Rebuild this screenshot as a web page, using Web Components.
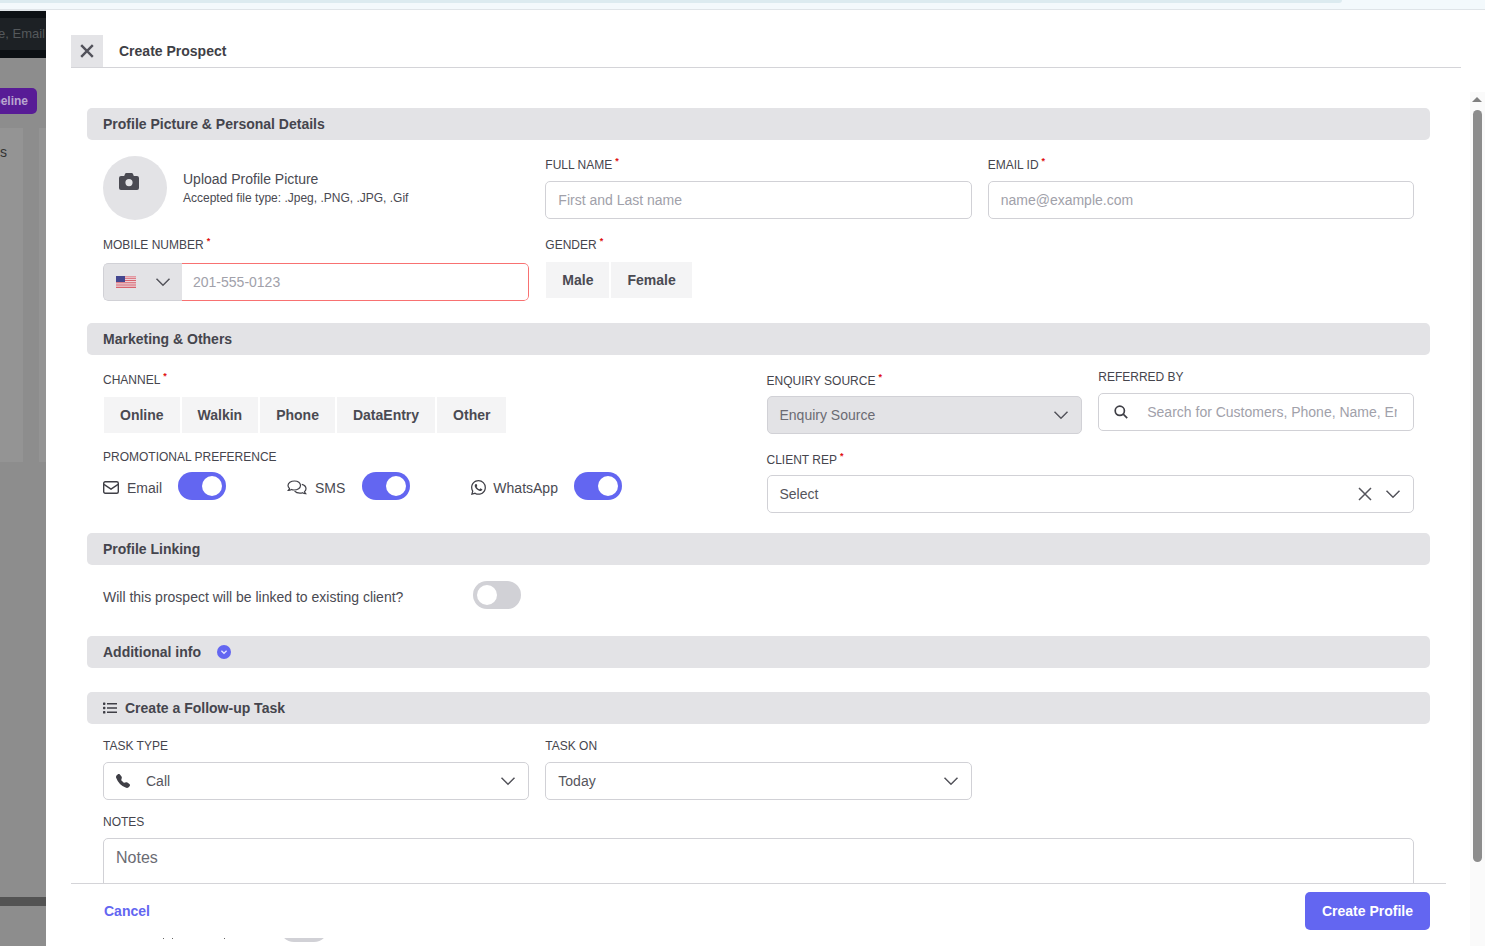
<!DOCTYPE html>
<html>
<head>
<meta charset="utf-8">
<title>Create Prospect</title>
<style>
  html, body { margin: 0; height: 100%; overflow: hidden; background: #f3f9fc; }
  body { font-family: "Liberation Sans", Arial, sans-serif; color: #4a4a52; }
</style>
</head>
<body>
<template id="ic-chevron"><svg width="16" height="16" viewBox="0 0 16 16" fill="none" stroke="#55555c" stroke-width="1.5"><path d="M1.5 4.8 8 11.2l6.5-6.4"/></svg></template>

<app-page>
  <backdrop-page slot="side"></backdrop-page>
  <prospect-drawer slot="main">
    <section-bar>Profile Picture &amp; Personal Details</section-bar>
    <form-row cols="3" style="margin-top:15px">
      <upload-box></upload-box>
      <field-box label="FULL NAME" required><text-field placeholder="First and Last name"></text-field></field-box>
      <field-box label="EMAIL ID" required><text-field placeholder="name@example.com"></text-field></field-box>
    </form-row>
    <form-row cols="3" style="margin-top:15px">
      <field-box label="MOBILE NUMBER" required gap="8"><phone-field placeholder="201-555-0123"></phone-field></field-box>
      <field-box label="GENDER" required gap="7"><button-group items="Male,Female" style="margin-left:1px"></button-group></field-box>
    </form-row>

    <section-bar style="margin-top:22px">Marketing &amp; Others</section-bar>
    <form-row cols="2" style="margin-top:15px">
      <div>
        <field-box label="CHANNEL" required gap="7"><button-group items="Online,Walkin,Phone,DataEntry,Other" style="margin-left:1px"></button-group></field-box>
        <field-box label="PROMOTIONAL PREFERENCE" gap="5" style="margin-top:14px"><promo-row></promo-row></field-box>
      </div>
      <div>
        <form-row cols="2" inner style="margin-top:1px">
          <field-box label="ENQUIRY SOURCE" required gap="5"><select-field value="Enquiry Source" filled></select-field></field-box>
          <field-box label="REFERRED BY" gap="6" style="margin-top:-4px"><search-field placeholder="Search for Customers, Phone, Name, Email"></search-field></field-box>
        </form-row>
        <field-box label="CLIENT REP" required gap="5" style="margin-top:16px"><select-field value="Select" clearable></select-field></field-box>
      </div>
    </form-row>

    <section-bar style="margin-top:20px">Profile Linking</section-bar>
    <link-row style="margin-top:16px">Will this prospect will be linked to existing client?</link-row>

    <section-bar style="margin-top:27px">Additional info<info-badge slot="after"></info-badge></section-bar>
    <section-bar style="margin-top:24px"><list-icon slot="before"></list-icon>Create a Follow-up Task</section-bar>

    <form-row cols="3" style="margin-top:12px">
      <field-box label="TASK TYPE" gap="6"><select-field value="Call" phone></select-field></field-box>
      <field-box label="TASK ON" gap="6"><select-field value="Today"></select-field></field-box>
    </form-row>
    <field-box label="NOTES" gap="6" style="margin:12px 16px 0"><notes-field placeholder="Notes"></notes-field></field-box>
    <hidden-row></hidden-row>
  </prospect-drawer>
</app-page>

<script>
const chevron = () => document.getElementById("ic-chevron").innerHTML;

class AppPage extends HTMLElement {
  constructor() {
    super();
    this.attachShadow({ mode: "open" });
    this.shadowRoot.innerHTML = `
      <style>
        :host { display: flex; flex-direction: column; height: 946px; overflow: hidden; }
        .strip { height: 9px; flex: none; background: #f3f9fc; border-bottom: 2px solid #dfe4e8; position: relative; box-sizing: content-box; }
        .strip i { display: block; height: 3px; width: 1342px; background: #dcebf0; border-radius: 0 0 8px 0; }
        .below { flex: 1; display: flex; min-height: 0; margin-top: -1px; }
      </style>
      <div class="strip"><i></i></div>
      <div class="below"><slot name="side"></slot><slot name="main"></slot></div>
    `;
  }
}

class BackdropPage extends HTMLElement {
  constructor() {
    super();
    this.attachShadow({ mode: "open" });
    this.shadowRoot.innerHTML = `
      <style>
        :host { display: flex; flex-direction: column; width: 46px; flex: none; background: #8d8d8d; overflow: hidden; font-size: 14px; }
        .top { height: 48px; flex: none; background: #0c1014; display: flex; align-items: center; justify-content: flex-end; }
        .search { height: 32px; width: 100%; background: #1d2125; color: #55595c; font-size: 13px; line-height: 32px; text-align: right; white-space: nowrap; direction: rtl; overflow: hidden; padding-right: 1px; box-sizing: border-box; }
        .pipe { margin: 30px 0 0 -30px; width: 67px; height: 26px; flex: none; border-radius: 5px; background: #581c96; color: #b9a6cf; font: bold 12px/26px "Liberation Sans", Arial, sans-serif; text-align: right; padding-right: 9px; box-sizing: border-box; }
        .tabs { display: flex; gap: 16px; height: 48px; margin: 14px 0 0 -20px; flex: none; }
        .tabs div { width: 43px; flex: none; background: #949494; color: #333; line-height: 48px; text-align: right; padding-right: 16px; box-sizing: border-box; }
        .tabs div + div { width: 40px; }
        .panel { height: 286px; flex: none; display: flex; gap: 16px; }
        .panel i { width: 23px; flex: none; background: #949494; }
        .panel i + i { width: 20px; }
        .bar { height: 9px; margin-top: 435px; background: #535353; flex: none; }
      </style>
      <div class="top"><div class="search">e, Email</div></div>
      <div class="pipe">Pipeline</div>
      <div class="tabs"><div>s</div><div></div></div>
      <div class="panel"><i></i><i></i></div>
      <div class="bar"></div>
    `;
  }
}

class ProspectDrawer extends HTMLElement {
  constructor() {
    super();
    this.attachShadow({ mode: "open" });
    this.shadowRoot.innerHTML = `
      <style>
        :host { display: flex; flex: 1; min-width: 0; flex-direction: column; background: #fff; position: relative; overflow: hidden; }
        header { display: flex; align-items: center; margin: 25px 24px 0 25px; height: 33px; flex: none; box-sizing: border-box; border-bottom: 1px solid #d4d4d8; }
        .close { width: 32px; height: 32px; background: #e4e4e7; display: flex; align-items: center; justify-content: center; }
        h1 { margin: 0 0 0 16px; font-size: 14px; font-weight: bold; color: #3f3f46; }
        .scroll { flex: 1; min-height: 0; display: flex; margin-top: 24px; overflow: hidden; }
        .body { margin: 16px 0 0 41px; width: 1343px; flex: none; }
        .track { width: 15px; margin-left: auto; flex: none; background: #fafafa; position: relative; height: 854px; }
        .track b { position: absolute; left: 2px; top: 5px; width: 0; height: 0; border: 5px solid transparent; border-top: 0; border-bottom: 5px solid #808080; }
        .track i { position: absolute; left: 3px; top: 18px; width: 9px; height: 752px; border-radius: 5px; background: #8c8c8c; }
        footer { position: absolute; left: 25px; width: 1375px; top: 873px; height: 55px; border-top: 1px solid #d4d4d8; background: #fff; display: flex; align-items: flex-start; justify-content: space-between; box-sizing: border-box; }
        .cancel { margin: 19px 0 0 33px; font-size: 14px; font-weight: bold; color: #6366f1; line-height: 16px; }
        .create { margin: 8px 16px 0 0; width: 125px; height: 38px; border: 0; border-radius: 5px; background: #6366f1; color: #fff; font: bold 14px "Liberation Sans", Arial, sans-serif; }
      </style>
      <header>
        <div class="close"><svg width="14" height="14" viewBox="0 0 14 14" stroke="#52525b" stroke-width="2.4" fill="none"><path d="M1.2 1.2l11.6 11.6M12.8 1.2 1.2 12.8"/></svg></div>
        <h1>Create Prospect</h1>
      </header>
      <div class="scroll">
        <div class="body"><slot></slot></div>
        <div class="track"><b></b><i></i></div>
      </div>
      <footer><span class="cancel">Cancel</span><button class="create">Create Profile</button></footer>
    `;
  }
}

class SectionBar extends HTMLElement {
  constructor() {
    super();
    this.attachShadow({ mode: "open" });
    this.shadowRoot.innerHTML = `
      <style>
        :host { display: flex; align-items: center; height: 32px; padding: 0 16px; background: #e3e3e6; border-radius: 5px; font-size: 14px; font-weight: bold; color: #45454d; }
      </style>
      <slot name="before"></slot><span><slot></slot></span><slot name="after"></slot>
    `;
  }
}

class InfoBadge extends HTMLElement {
  constructor() {
    super();
    this.attachShadow({ mode: "open" });
    this.shadowRoot.innerHTML = `
      <style>:host { display: flex; margin-left: 16px; }</style>
      <svg width="14" height="14" viewBox="0 0 14 14"><circle cx="7" cy="7" r="7" fill="#6366f1"/><path d="M4.4 5.8 7 8.3l2.6-2.5" fill="none" stroke="#e4e4ff" stroke-width="1.3"/></svg>
    `;
  }
}

class ListIcon extends HTMLElement {
  constructor() {
    super();
    this.attachShadow({ mode: "open" });
    this.shadowRoot.innerHTML = `
      <style>:host { display: flex; margin-right: 8px; }</style>
      <svg width="14" height="12" viewBox="0 0 14 12" fill="#3f3f46"><rect x="0" y="0.5" width="2.4" height="2.4" rx=".6"/><rect x="0" y="4.8" width="2.4" height="2.4" rx=".6"/><rect x="0" y="9.1" width="2.4" height="2.4" rx=".6"/><rect x="4" y="1" width="10" height="1.5"/><rect x="4" y="5.25" width="10" height="1.5"/><rect x="4" y="9.5" width="10" height="1.5"/></svg>
    `;
  }
}

class FormRow extends HTMLElement {
  constructor() {
    super();
    this.attachShadow({ mode: "open" });
    const cols = this.getAttribute("cols") || "3";
    const pad = this.hasAttribute("inner") ? "0" : "0 16px";
    this.shadowRoot.innerHTML = `
      <style>
        :host { display: grid; grid-template-columns: repeat(${cols}, minmax(0, 1fr)); gap: 16px; padding: ${pad}; align-items: start; }
      </style>
      <slot></slot>
    `;
  }
}

class FieldBox extends HTMLElement {
  constructor() {
    super();
    this.attachShadow({ mode: "open" });
    const req = this.hasAttribute("required") ? "<sup>*</sup>" : "";
    const gap = this.getAttribute("gap") || "6";
    this.shadowRoot.innerHTML = `
      <style>
        :host { display: block; }
        label { display: block; height: 20px; line-height: 20px; font-size: 12px; color: #45454d; margin-bottom: ${gap}px; white-space: nowrap; }
        sup { color: #e01010; font-size: 9px; line-height: 0; margin-left: 3px; vertical-align: 5px; font-weight: bold; }
      </style>
      <label>${this.getAttribute("label")}${req}</label>
      <slot></slot>
    `;
  }
}

class UploadBox extends HTMLElement {
  constructor() {
    super();
    this.attachShadow({ mode: "open" });
    this.shadowRoot.innerHTML = `
      <style>
        :host { display: flex; align-items: flex-start; }
        .pic { width: 64px; height: 64px; border-radius: 50%; background: #e3e3e6; flex: none; padding: 17px 0 0 16px; box-sizing: border-box; margin-top: 1px; }
        svg { display: block; }
        .txt { margin: 16px 0 0 16px; }
        .t { font-size: 14px; line-height: 16px; color: #4a4a52; }
        .s { font-size: 12px; line-height: 14px; margin-top: 4px; color: #4a4a52; }
      </style>
      <div class="pic"><svg width="20" height="17" viewBox="0 0 20 17" fill="#4a4a52"><path fill-rule="evenodd" d="M2 3h3.2l.8-2c.2-.6.7-1 1.3-1h5.4c.6 0 1.1.4 1.3 1l.8 2H18a2 2 0 0 1 2 2v10a2 2 0 0 1-2 2H2a2 2 0 0 1-2-2V5a2 2 0 0 1 2-2zm8 3a3.6 3.6 0 1 0 0 7.2A3.6 3.6 0 0 0 10 6z"/></svg></div>
      <div class="txt"><div class="t">Upload Profile Picture</div><div class="s">Accepted file type: .Jpeg, .PNG, .JPG, .Gif</div></div>
    `;
  }
}

const fieldCss = `
  :host { display: flex; align-items: center; height: 38px; box-sizing: border-box; border: 1px solid #d1d1d6; border-radius: 5px; background: #fff; font-size: 14px; color: #4a4a52; overflow: hidden; }
  input { flex: 1; min-width: 0; border: 0; outline: 0; background: transparent; padding: 0; font: 14px "Liberation Sans", Arial, sans-serif; color: #4a4a52; }
  input::placeholder { color: #a1a1aa; opacity: 1; }
`;

class TextField extends HTMLElement {
  constructor() {
    super();
    this.attachShadow({ mode: "open" });
    this.shadowRoot.innerHTML = `
      <style>${fieldCss} :host { padding: 0 12px; }</style>
      <input placeholder="${this.getAttribute("placeholder")}">
    `;
  }
}

class PhoneField extends HTMLElement {
  constructor() {
    super();
    this.attachShadow({ mode: "open" });
    this.shadowRoot.innerHTML = `
      <style>${fieldCss}
        :host { border: 0; }
        .code { width: 79px; height: 38px; flex: none; box-sizing: border-box; background: #e3e3e6; border: 1px solid #d1d1d6; border-right: 0; border-radius: 5px 0 0 5px; display: flex; align-items: center; padding-left: 12px; gap: 19px; }
        .num { flex: 1; height: 38px; box-sizing: border-box; border: 1px solid #f87171; border-left: 0; border-radius: 0 5px 5px 0; display: flex; align-items: center; padding-left: 11px; }
      </style>
      <div class="code">
        <svg width="20" height="12" viewBox="0 0 20 12"><rect width="20" height="12" fill="#f0f0f4"/><path d="M0 .9h20M0 2.7h20M0 4.5h20M0 6.3h20M0 8.1h20M0 9.9h20M0 11.5h20" stroke="#d9636e" stroke-width="1"/><rect width="9" height="6" fill="#43468f"/></svg>
        ${chevron()}
      </div>
      <div class="num"><input placeholder="${this.getAttribute("placeholder")}"></div>
    `;
  }
}

class SearchField extends HTMLElement {
  constructor() {
    super();
    this.attachShadow({ mode: "open" });
    this.shadowRoot.innerHTML = `
      <style>${fieldCss}
        :host { padding: 0 16px 0 15px; }
        svg { margin-right: 19px; flex: none; }
      </style>
      <svg width="14" height="14" viewBox="0 0 14 14" fill="none" stroke="#3f3f46" stroke-width="1.7"><circle cx="5.8" cy="5.8" r="4.6"/><path d="m9.2 9.2 4 4"/></svg>
      <input placeholder="${this.getAttribute("placeholder")}">
    `;
  }
}

class SelectField extends HTMLElement {
  constructor() {
    super();
    this.attachShadow({ mode: "open" });
    const filled = this.hasAttribute("filled");
    const phone = this.hasAttribute("phone") ? `<svg class="ph" width="14" height="14" viewBox="0 0 16 16" fill="#3f3f46"><path d="M1.885.511a1.745 1.745 0 0 1 2.61.163L6.29 2.98c.329.423.445.974.315 1.494l-.547 2.19a.678.678 0 0 0 .178.643l2.457 2.457a.678.678 0 0 0 .644.178l2.189-.547a1.745 1.745 0 0 1 1.494.315l2.306 1.794c.829.645.905 1.87.163 2.611l-1.034 1.034c-.74.74-1.846 1.065-2.877.702a18.634 18.634 0 0 1-7.01-4.42 18.634 18.634 0 0 1-4.42-7.009c-.362-1.03-.037-2.137.703-2.877L1.885.511z"/></svg>` : "";
    const clear = this.hasAttribute("clearable") ? `<svg class="x" width="14" height="14" viewBox="0 0 14 14" fill="none" stroke="#55555c" stroke-width="1.5"><path d="m1 1 12 12M13 1 1 13"/></svg>` : "";
    this.shadowRoot.innerHTML = `
      <style>${fieldCss}
        :host { padding: 0 12px; ${filled ? "background:#e3e3e6;" : ""} color: ${filled ? "#6b6b73" : "#55555c"}; }
        .ph { margin-right: 16px; flex: none; }
        .x { margin-right: 13px; flex: none; }
        span { flex: 1; }
      </style>
      ${phone}<span>${this.getAttribute("value")}</span>${clear}${chevron()}
    `;
  }
}

class NotesField extends HTMLElement {
  constructor() {
    super();
    this.attachShadow({ mode: "open" });
    this.shadowRoot.innerHTML = `
      <style>
        :host { display: block; height: 60px; box-sizing: border-box; border: 1px solid #d1d1d6; border-radius: 5px; padding: 9px 12px; font-size: 16px; line-height: 20px; color: #6b6b73; }
      </style>
      ${this.getAttribute("placeholder")}
    `;
  }
}

// row under the footer, only the bottom of its toggle and a few text tops show
class HiddenRow extends HTMLElement {
  constructor() {
    super();
    this.attachShadow({ mode: "open" });
    this.shadowRoot.innerHTML = `
      <style>
        :host { display: flex; height: 28px; margin-top: 16px; padding-left: 76px; }
        i { width: 1px; height: 1px; margin-top: 24px; background: #666; flex: none; }
        toggle-switch { margin-left: 55px; }
      </style>
      <i></i><i style="margin-left:8px"></i><i style="margin-left:51px"></i>
      <toggle-switch></toggle-switch>
    `;
  }
}

class ButtonGroup extends HTMLElement {
  constructor() {
    super();
    this.attachShadow({ mode: "open" });
    const btns = this.getAttribute("items").split(",").map((t) => `<span>${t}</span>`).join("");
    this.shadowRoot.innerHTML = `
      <style>
        :host { display: flex; gap: 2px; }
        span { height: 36px; line-height: 36px; padding: 0 16px; background: #f4f4f5; font-size: 14px; font-weight: bold; color: #4a4a52; }
      </style>
      ${btns}
    `;
  }
}

class ToggleSwitch extends HTMLElement {
  constructor() {
    super();
    this.attachShadow({ mode: "open" });
    const on = this.hasAttribute("on");
    this.shadowRoot.innerHTML = `
      <style>
        :host { display: block; width: 48px; height: 28px; border-radius: 14px; background: ${on ? "#6366f1" : "#d1d1d6"}; position: relative; flex: none; }
        i { position: absolute; top: 4px; ${on ? "right: 4px" : "left: 4px"}; width: 20px; height: 20px; border-radius: 50%; background: #fff; }
      </style>
      <i></i>
    `;
  }
}

class PromoRow extends HTMLElement {
  constructor() {
    super();
    this.attachShadow({ mode: "open" });
    this.shadowRoot.innerHTML = `
      <style>
        :host { display: flex; align-items: center; height: 28px; font-size: 14px; color: #4a4a52; }
        svg { flex: none; margin-top: 3px; }
        span { padding-top: 3px; }
      </style>
      <svg width="16" height="13" viewBox="0 0 16 13" fill="none" stroke="#3f3f46" stroke-width="1.4"><rect x=".7" y=".7" width="14.6" height="11.6" rx="1.5"/><path d="m.9 3.4 7.1 4.7 7.1-4.7"/></svg>
      <span style="margin-left:8px">Email</span>
      <toggle-switch on style="margin-left:16px"></toggle-switch>
      <svg style="margin-left:61px" width="20" height="16" viewBox="0 0 20 16" fill="none" stroke="#3f3f46" stroke-width="1.2"><path d="M7.5 1C3.9 1 1 3 1 5.5c0 1.1.6 2.1 1.500 2.900-.1.900-.7 1.600-1.200 2.100 1.200 0 2.400-.5 3.100-1 .8.3 1.700.5 2.600.5 3.600 0 6.500-2 6.500-4.500S11.100 1 7.500 1z"/><path d="M14.800 4.400C17.300 5 19 6.700 19 8.700c0 1.100-.6 2.100-1.500 2.900.1.900.7 1.600 1.200 2.100-1.200 0-2.400-.5-3.100-1-.8.3-1.700.5-2.600.5-2.300 0-4.300-.8-5.400-2"/></svg>
      <span style="margin-left:8px">SMS</span>
      <toggle-switch on style="margin-left:17px"></toggle-switch>
      <svg style="margin-left:61px" width="15" height="15" viewBox="0 0 16 16" fill="#3f3f46"><path d="M13.601 2.326A7.854 7.854 0 0 0 7.994 0C3.627 0 .068 3.558.064 7.926c0 1.399.366 2.76 1.057 3.965L0 16l4.204-1.102a7.933 7.933 0 0 0 3.79.965h.004c4.368 0 7.926-3.558 7.93-7.93A7.898 7.898 0 0 0 13.6 2.326zM7.994 14.521a6.573 6.573 0 0 1-3.356-.92l-.24-.144-2.494.654.666-2.433-.156-.251a6.56 6.56 0 0 1-1.007-3.505c0-3.626 2.957-6.584 6.591-6.584a6.56 6.56 0 0 1 4.66 1.931 6.557 6.557 0 0 1 1.928 4.66c-.004 3.639-2.961 6.592-6.592 6.592zm3.615-4.934c-.197-.099-1.17-.578-1.353-.646-.182-.065-.315-.099-.445.099-.133.197-.513.646-.627.775-.114.133-.232.148-.43.05-.197-.1-.836-.308-1.592-.985-.59-.525-.985-1.175-1.103-1.372-.114-.198-.011-.304.088-.403.087-.088.197-.232.296-.346.1-.114.133-.198.198-.33.065-.134.034-.248-.015-.347-.05-.099-.445-1.076-.612-1.47-.16-.389-.323-.335-.445-.34-.114-.007-.247-.007-.38-.007a.729.729 0 0 0-.529.247c-.182.198-.691.677-.691 1.654 0 .977.71 1.916.81 2.049.098.133 1.394 2.132 3.383 2.992.47.205.84.326 1.129.418.475.152.904.129 1.246.08.38-.058 1.171-.48 1.338-.943.164-.464.164-.86.114-.943-.049-.084-.182-.133-.38-.232z"/></svg>
      <span style="margin-left:7px">WhatsApp</span>
      <toggle-switch on style="margin-left:16px"></toggle-switch>
    `;
  }
}

class LinkRow extends HTMLElement {
  constructor() {
    super();
    this.attachShadow({ mode: "open" });
    this.shadowRoot.innerHTML = `
      <style>
        :host { display: flex; align-items: center; padding-left: 16px; height: 28px; font-size: 14px; color: #4a4a52; }
        span { width: 370px; padding-top: 3px; }
      </style>
      <span><slot></slot></span><toggle-switch></toggle-switch>
    `;
  }
}

customElements.define("app-page", AppPage);
customElements.define("backdrop-page", BackdropPage);
customElements.define("prospect-drawer", ProspectDrawer);
customElements.define("section-bar", SectionBar);
customElements.define("info-badge", InfoBadge);
customElements.define("list-icon", ListIcon);
customElements.define("form-row", FormRow);
customElements.define("field-box", FieldBox);
customElements.define("upload-box", UploadBox);
customElements.define("text-field", TextField);
customElements.define("phone-field", PhoneField);
customElements.define("search-field", SearchField);
customElements.define("select-field", SelectField);
customElements.define("notes-field", NotesField);
customElements.define("hidden-row", HiddenRow);
customElements.define("button-group", ButtonGroup);
customElements.define("toggle-switch", ToggleSwitch);
customElements.define("promo-row", PromoRow);
customElements.define("link-row", LinkRow);
</script>
</body>
</html>
